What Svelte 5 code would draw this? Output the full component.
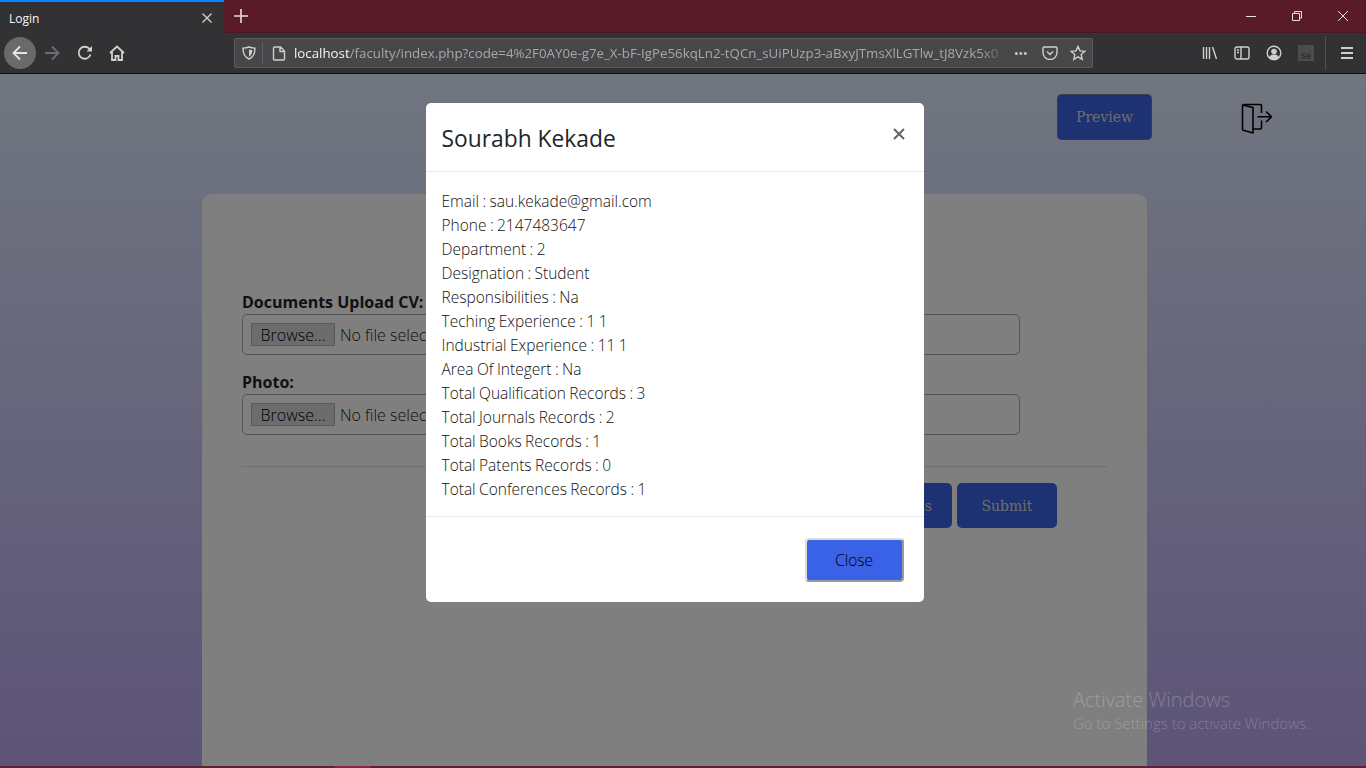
<script>
	const details = [
		'Email : sau.kekade@gmail.com',
		'Phone : 2147483647',
		'Department : 2',
		'Designation : Student',
		'Responsibilities : Na',
		'Teching Experience : 1 1',
		'Industrial Experience : 11 1',
		'Area Of Integert : Na',
		'Total Qualification Records : 3',
		'Total Journals Records : 2',
		'Total Books Records : 1',
		'Total Patents Records : 0',
		'Total Conferences Records : 1'
	];
	const uploads = ['Documents Upload CV:', 'Photo:'];
	const url = '/faculty/index.php?code=4%2F0AY0e-g7e_X-bF-IgPe56kqLn2-tQCn_sUiPUzp3-aBxyJTmsXlLGTlw_tJ8Vzk5x0';
</script>

<div class="window">
	<div class="tabbar">
		<div class="tab">
			<span class="tab-title">Login</span>
			<svg class="tab-close" width="12" height="12" viewBox="0 0 12 12"><path d="M1.5 1.5l9 9M10.5 1.5l-9 9" /></svg>
		</div>
		<svg class="new-tab" width="14" height="14" viewBox="0 0 14 14"><path d="M7 0v14M0 7h14" /></svg>
		<div class="win-controls">
			<svg width="12" height="12" viewBox="0 0 12 12"><path d="M1 6.5h10" /></svg>
			<svg width="12" height="12" viewBox="0 0 12 12"><path d="M3.5 3V1.500h7V8H8.500M1.500 3.500h7v7h-7z" /></svg>
			<svg width="12" height="12" viewBox="0 0 12 12"><path d="M1 1l10 10M11 1L1 11" /></svg>
		</div>
	</div>

	<div class="toolbar">
		<div class="nav-btn back">
			<svg width="18" height="18" viewBox="0 0 18 18"><path d="M16 9H2.500M9 2.500L2.500 9 9 15.500" /></svg>
		</div>
		<div class="nav-btn forward">
			<svg width="18" height="18" viewBox="0 0 18 18"><path d="M2 9h13.500M9 2.500L15.500 9 9 15.500" /></svg>
		</div>
		<div class="nav-btn reload">
			<svg width="16" height="16" viewBox="0 0 16 16"><path d="M13.500 9.500A6 6 0 1 1 12 3.500l2 1.800" /><path class="solid" d="M15 1v5.500H9.500z" /></svg>
		</div>
		<div class="nav-btn">
			<svg width="16" height="16" viewBox="0 0 16 16"><path d="M1 8l7-6.500L15 8M3 6.500V15h3.500v-4h3v4H13V6.500" /></svg>
		</div>

		<div class="urlbar">
			<svg class="ico shield" width="14" height="14" viewBox="0 0 14 14"><path d="M7 1c2 .9 3.500 1.100 6 1.100 0 5.500-1.500 9.200-6 10.900C2.500 11.300 1 7.600 1 2.100 3.500 2.100 5 1.900 7 1z" /><path class="solid" d="M7 3.500c1 .4 2 .6 3.300.6C10.200 7.300 9.400 9.400 7 10.700z" /></svg>
			<span class="url-sep"></span>
			<svg class="ico" width="14" height="15" viewBox="0 0 14 15"><path d="M2.500 1h6l4 4v8a1 1 0 0 1-1 1h-9a1 1 0 0 1-1-1V2a1 1 0 0 1 1-1zM8 1v4.500h4.500" /></svg>
			<div class="url-text"><span class="host">localhost</span>{url}</div>
			<span class="dots">•••</span>
			<svg class="ico pocket" width="16" height="14" viewBox="0 0 16 14"><path d="M2 1h12a1 1 0 0 1 1 1v4.500a7 7 0 0 1-14 0V2a1 1 0 0 1 1-1zM5 5.500l3 3 3-3" /></svg>
			<svg class="ico star" width="16" height="16" viewBox="0 0 16 16"><path d="M8 1.500l2 4.400 4.800.5-3.600 3.200 1 4.700L8 11.900l-4.200 2.400 1-4.700L1.200 6.400 6 5.900z" /></svg>
		</div>

		<div class="tools">
			<svg class="ico" width="16" height="14" viewBox="0 0 16 14"><path d="M1.500 1v12M4.500 1v12M7.500 1v12M10.500 1l4 12" /></svg>
			<svg class="ico" width="16" height="14" viewBox="0 0 16 14"><rect x="1" y="1" width="14" height="12" rx="2" /><path d="M7 1v12M3 4h2M3 6.500h2" /></svg>
			<svg class="ico" width="16" height="16" viewBox="0 0 16 16"><circle cx="8" cy="8" r="6.800" /><circle cx="8" cy="6.500" r="2.800" class="solid" /><path class="solid" d="M3 12.500c1-2.500 3-3 5-3s4 .5 5 3C11.500 14.300 9.500 15 8 15s-3.500-.7-5-2.500z" /></svg>
			<div class="se-ext"><span>Se</span></div>
			<span class="tool-sep"></span>
			<svg class="ico burger" width="14" height="14" viewBox="0 0 14 14"><path d="M1 2h12M1 7h12M1 12h12" /></svg>
		</div>
	</div>

	<div class="page">
		<div class="topline">
			<button class="primary preview">Preview</button>
			<svg class="logout" width="32" height="32" viewBox="0 0 32 32">
				<path d="M1.500 2l10.500 2.500V30l-9-2.500a1.500 1.500 0 0 1-1.500-1.500z" />
				<path d="M2.500 1.500H19a1.500 1.500 0 0 1 1.500 1.500v7M20.500 17.500V24.500A1.500 1.500 0 0 1 19 26h-7" />
				<path d="M16.500 13.750H30.500M25 8.500l5.500 5.250L25 19" />
			</svg>
		</div>

		<div class="card">
			{#each uploads as label}
				<div class="field">
					<div class="field-label">{label}</div>
					<div class="file-box">
						<span class="browse">Browse...</span>
						<span class="no-file">No file selected.</span>
					</div>
				</div>
			{/each}
			<div class="rule"></div>
			<div class="actions">
				<button class="primary details">Details</button>
				<button class="primary submit">Submit</button>
			</div>
		</div>

		<div class="overlay">
			<div class="modal">
				<div class="modal-header">
					<h3>Sourabh Kekade</h3>
					<svg class="modal-x" width="12" height="12" viewBox="0 0 12 12"><path d="M1 1l10 10M11 1L1 11" /></svg>
				</div>
				<div class="modal-body">
					{#each details as line}
						<div>{line}</div>
					{/each}
				</div>
				<div class="modal-footer">
					<button class="close">Close</button>
				</div>
			</div>
		</div>

		<div class="activate">
			<div class="activate-title">Activate Windows</div>
			<div class="activate-sub">Go to Settings to activate Windows.</div>
		</div>
	</div>

	<div class="taskbar"><span></span></div>
</div>

<style>
	:global(body) {
		margin: 0;
		overflow: hidden;
	}

	.window {
		width: 1366px;
		height: 768px;
		display: flex;
		flex-direction: column;
		font-family: 'Open Sans', 'Noto Sans', sans-serif;
		overflow: hidden;
	}

	svg {
		flex: none;
		fill: none;
		stroke: currentColor;
	}

	.tabbar {
		height: 33px;
		flex: none;
		box-sizing: border-box;
		display: flex;
		align-items: center;
		background: #5a1b28;
		border-bottom: 1px solid #4a1622;
		color: #e8e0e2;
	}

	.tab {
		width: 224px;
		height: 33px;
		box-sizing: border-box;
		display: flex;
		align-items: center;
		justify-content: space-between;
		padding: 2px 11px 0 9px;
		background: #323234;
		border-top: 2px solid #0a84ff;
		color: #f4f4f4;
		font-size: 12px;
	}

	.tab-close {
		stroke: #d0d0d0;
		stroke-width: 1.4;
	}

	.new-tab {
		margin-left: 10px;
		stroke: #e6dcde;
		stroke-width: 1.6;
	}

	.win-controls {
		margin-left: auto;
		display: flex;
		gap: 34px;
		padding-right: 17px;
		align-items: center;
		stroke-width: 1;
	}

	.toolbar {
		height: 41px;
		flex: none;
		box-sizing: border-box;
		display: flex;
		align-items: center;
		padding: 0 0 0 4px;
		background: #323234;
		border-bottom: 1px solid #0c0c0d;
		color: #d2d2d3;
	}

	.nav-btn {
		width: 32px;
		height: 32px;
		display: flex;
		align-items: center;
		justify-content: center;
		stroke-width: 1.8;
	}

	.nav-btn svg {
		stroke-width: 1.8;
	}

	.reload {
		margin-left: 1px;
	}

	.back {
		background: #6a6a6b;
		border-radius: 50%;
		color: #e4e4e4;
	}

	.forward {
		color: #6e6e70;
	}

	.solid {
		fill: currentColor;
		stroke: none;
	}

	.urlbar {
		margin-left: 101px;
		width: 859px;
		height: 30px;
		box-sizing: border-box;
		display: flex;
		align-items: center;
		background: #474749;
		border: 1px solid #5c5c5e;
		border-radius: 2px;
	}

	.ico {
		color: #cfcfd0;
		stroke-width: 1.4;
	}

	.shield {
		margin-left: 7px;
	}

	.url-sep {
		width: 1px;
		height: 22px;
		margin: 0 9px 0 6px;
		background: #5f5f61;
	}

	.url-text {
		margin-left: 8px;
		width: 714px;
		overflow: hidden;
		white-space: nowrap;
		font-size: 13.3px;
		color: #a8a8aa;
		-webkit-mask-image: linear-gradient(to right, #000 96%, transparent);
		mask-image: linear-gradient(to right, #000 96%, transparent);
	}

	.host {
		color: #f3f3f3;
	}

	.dots {
		margin-left: 6px;
		font-size: 12px;
		letter-spacing: 0;
		color: #cfcfd0;
		width: 18px;
		white-space: nowrap;
	}

	.pocket {
		margin-left: 10px;
	}

	.star {
		margin-left: 12px;
	}

	.tools {
		display: flex;
		align-items: center;
		margin-left: 109px;
		gap: 16px;
	}

	.se-ext {
		width: 16px;
		height: 16px;
		background: #4c4c4d;
		display: flex;
		align-items: flex-end;
		justify-content: center;
		font-size: 9px;
		font-weight: 700;
		line-height: 10px;
		color: #2f2f30;
	}

	.tool-sep {
		width: 1px;
		height: 34px;
		margin-left: -5px;
		background: #4e4e50;
	}

	.burger {
		margin-left: -2px;
		stroke-width: 2;
	}

	.page {
		position: relative;
		flex: 1;
		min-height: 0;
		box-sizing: border-box;
		padding-right: 17px;
		overflow: hidden;
		background: linear-gradient(to bottom, #e0ecff, #baa8f0);
	}

	.topline {
		height: 120px;
		box-sizing: border-box;
		padding: 20px 0 0 1057px;
		display: flex;
		align-items: flex-start;
	}

	.primary {
		height: 45px;
		border: none;
		border-radius: 5px;
		background: #3a62e6;
		color: #dcdcdc;
		font-family: 'DejaVu Serif', serif;
		font-size: 14px;
		padding: 0;
	}

	.preview {
		width: 95px;
		height: 46px;
		outline: 1px dotted #8a8a8a;
		outline-offset: -1px;
	}

	.logout {
		margin: 9px 0 0 89px;
		stroke: #000;
		stroke-width: 1.6;
		stroke-linejoin: round;
	}

	.card {
		width: 945px;
		height: 700px;
		margin: 0 auto;
		box-sizing: border-box;
		padding: 98px 40px 0;
		background: #fff;
		border-radius: 10px;
	}

	.field {
		margin-bottom: 17px;
	}

	.field-label {
		font-weight: 700;
		font-size: 16px;
		line-height: 20px;
		margin-bottom: 2px;
		color: #222;
	}

	.file-box {
		width: 778px;
		height: 41px;
		box-sizing: border-box;
		display: flex;
		align-items: center;
		padding-left: 8px;
		border: 1px solid #a9a9a9;
		border-radius: 5px;
		font-size: 16px;
		font-weight: 300;
		color: #222;
	}

	.browse {
		width: 84px;
		height: 23px;
		box-sizing: border-box;
		display: flex;
		align-items: center;
		justify-content: center;
		background: #d8d8d8;
		border: 1px solid #b4b4b4;
		margin-right: 5px;
		color: #000;
	}

	.rule {
		height: 1px;
		margin-top: 31px;
		background: #dedede;
	}

	.actions {
		margin-top: 16px;
		display: flex;
		justify-content: flex-end;
		gap: 5px;
		padding-right: 50px;
	}

	.details {
		width: 140px;
		padding-left: 50px;
	}

	.submit {
		width: 100px;
	}

	.overlay {
		position: absolute;
		inset: 0;
		padding: 29px 17px 0 0;
		display: flex;
		justify-content: center;
		align-items: flex-start;
		background: rgba(0, 0, 0, 0.5);
	}

	.modal {
		width: 498px;
		box-sizing: border-box;
		background: #fff;
		border-radius: 5px;
		color: #212529;
	}

	.modal-header {
		height: 69px;
		box-sizing: border-box;
		padding: 4px 19px 0 16px;
		display: flex;
		align-items: center;
		justify-content: space-between;
		border-bottom: 1px solid #e9ecef;
	}

	h3 {
		margin: 0;
		font-size: 22.8px;
		line-height: 36px;
		font-weight: 400;
	}

	.modal-x {
		margin-top: -10px;
		stroke: #5f6468;
		stroke-width: 2;
	}

	.modal-body {
		padding: 17px 16px 15px;
		font-size: 15.5px;
		line-height: 24px;
		font-weight: 300;
		word-spacing: -0.6px;
		border-bottom: 1px solid #e9ecef;
		color: #111;
	}

	.modal-footer {
		height: 85px;
		box-sizing: border-box;
		padding: 21px 20px 0 0;
		display: flex;
		justify-content: flex-end;
		align-items: flex-start;
	}

	.close {
		width: 99px;
		height: 44px;
		box-sizing: border-box;
		background: #3a62e6;
		border: 2px solid;
		border-color: #dcdcdc #9a9a9a #9a9a9a #dcdcdc;
		border-radius: 4px;
		color: #000;
		font-family: inherit;
		font-size: 15.5px;
		font-weight: 300;
		padding: 0;
	}

	.activate {
		position: absolute;
		left: 1073px;
		top: 613px;
		color: rgba(255, 255, 255, 0.24);
		font-weight: 300;
	}

	.activate-title {
		font-size: 20px;
		line-height: 26px;
	}

	.activate-sub {
		font-size: 15px;
		line-height: 20px;
	}

	.taskbar {
		height: 2px;
		flex: none;
		background: #5b2234;
		position: relative;
	}

	.taskbar span {
		position: absolute;
		left: 335px;
		top: 0;
		width: 36px;
		height: 2px;
		background: #8c2440;
	}
</style>
